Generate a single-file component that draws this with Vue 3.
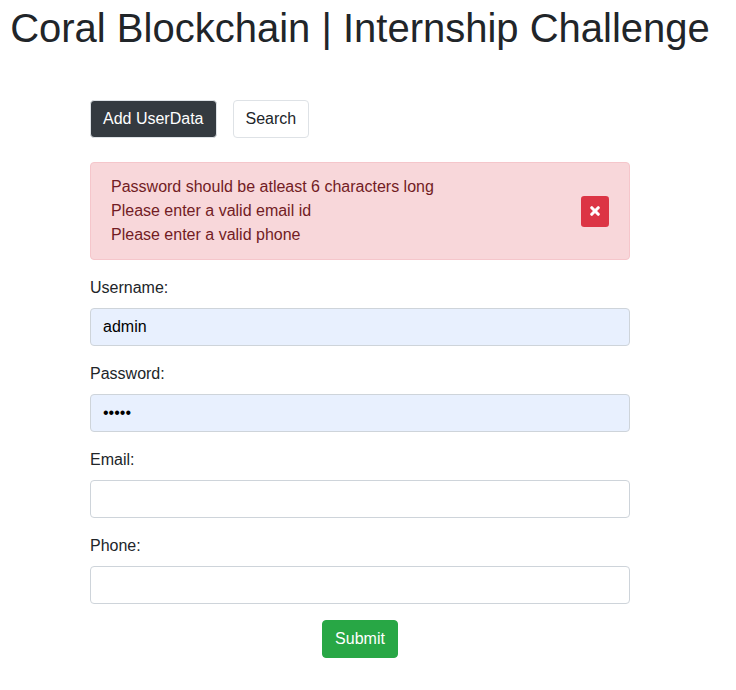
<script setup>
import { ref } from 'vue'

const errors = ref([
  'Password should be atleast 6 characters long',
  'Please enter a valid email id',
  'Please enter a valid phone',
])
const fields = ref([
  { id: 'username', label: 'Username:', type: 'text', value: 'admin', filled: true },
  { id: 'password', label: 'Password:', type: 'password', value: 'admin', filled: true },
  { id: 'email', label: 'Email:', type: 'text', value: '', filled: false },
  { id: 'phone', label: 'Phone:', type: 'text', value: '', filled: false },
])
</script>

<template>
  <div class="page">
    <h1>Coral Blockchain | Internship Challenge</h1>
    <main>
      <nav class="tabs">
        <button class="btn dark">Add UserData</button>
        <button class="btn light">Search</button>
      </nav>
      <div v-if="errors.length" class="alert">
        <div>
          <div v-for="e in errors" :key="e">{{ e }}</div>
        </div>
        <button class="close" aria-label="Close" @click="errors = []">
          <svg viewBox="-10 70 372 372" width="10" height="10"><path fill="currentColor" stroke="currentColor" stroke-width="20" d="M242.72 256l100.07-100.07c12.28-12.28 12.28-32.19 0-44.48l-22.24-22.24c-12.28-12.28-32.19-12.28-44.48 0L176 189.28 75.93 89.21c-12.28-12.28-32.19-12.28-44.48 0L9.21 111.45c-12.28 12.28-12.28 32.19 0 44.48L109.28 256 9.21 356.07c-12.28 12.28-12.28 32.19 0 44.48l22.24 22.24c12.28 12.28 32.2 12.28 44.48 0L176 322.72l100.07 100.07c12.28 12.28 32.2 12.28 44.48 0l22.24-22.24c12.28-12.28 12.28-32.19 0-44.48L242.72 256z" /></svg>
        </button>
      </div>
      <form @submit.prevent>
        <div v-for="f in fields" :key="f.id" class="group">
          <label :for="f.id">{{ f.label }}</label>
          <input :id="f.id" v-model="f.value" :type="f.type" :class="{ filled: f.filled }" />
        </div>
        <button class="btn submit">Submit</button>
      </form>
    </main>
  </div>
</template>

<style>
body {
  background: #fff;
}
</style>

<style scoped>
.page,
.page * {
  box-sizing: border-box;
}
.page {
  width: 720px;
  font: 16px/24px "Liberation Sans", Arial, sans-serif;
  color: #212529;
}
h1 {
  margin: 0;
  padding-top: 4px;
  font-size: 40px;
  font-weight: 500;
  line-height: 48px;
  text-align: center;
  white-space: nowrap;
}
main {
  width: 540px;
  margin: 48px auto 0;
}
button,
input {
  font: inherit;
  margin: 0;
}
.tabs {
  display: flex;
  gap: 16px;
  margin-bottom: 24px;
}
.btn {
  height: 38px;
  padding: 6px 12px;
  border: 1px solid transparent;
  border-radius: 4px;
}
.dark {
  color: #fff;
  background: #343a40;
  border-color: #dee2e6;
}
.light {
  color: #212529;
  background: #fff;
  border-color: #dee2e6;
}
.alert {
  display: flex;
  align-items: center;
  justify-content: space-between;
  height: 98px;
  margin-bottom: 16px;
  padding: 12px 20px;
  color: #721c24;
  background: #f8d7da;
  border: 1px solid #f5c6cb;
  border-radius: 4px;
}
.close {
  display: flex;
  align-items: flex-start;
  justify-content: center;
  width: 28px;
  height: 31px;
  padding: 10px 0 0;
  color: #fff;
  background: #dc3545;
  border: 0;
  border-radius: 3.2px;
}
.close svg {
  display: block;
}
.group {
  height: 70px;
  margin-bottom: 16px;
}
label {
  display: block;
  height: 24px;
  margin-bottom: 8px;
}
input {
  display: block;
  width: 100%;
  height: 38px;
  padding: 6px 12px;
  color: #000;
  background: #fff;
  border: 1px solid #ced4da;
  border-radius: 4px;
}
.filled {
  background: #e8f0fe;
}
.submit {
  display: block;
  margin: 0 auto;
  color: #fff;
  background: #28a745;
  border-color: #28a745;
}
</style>
